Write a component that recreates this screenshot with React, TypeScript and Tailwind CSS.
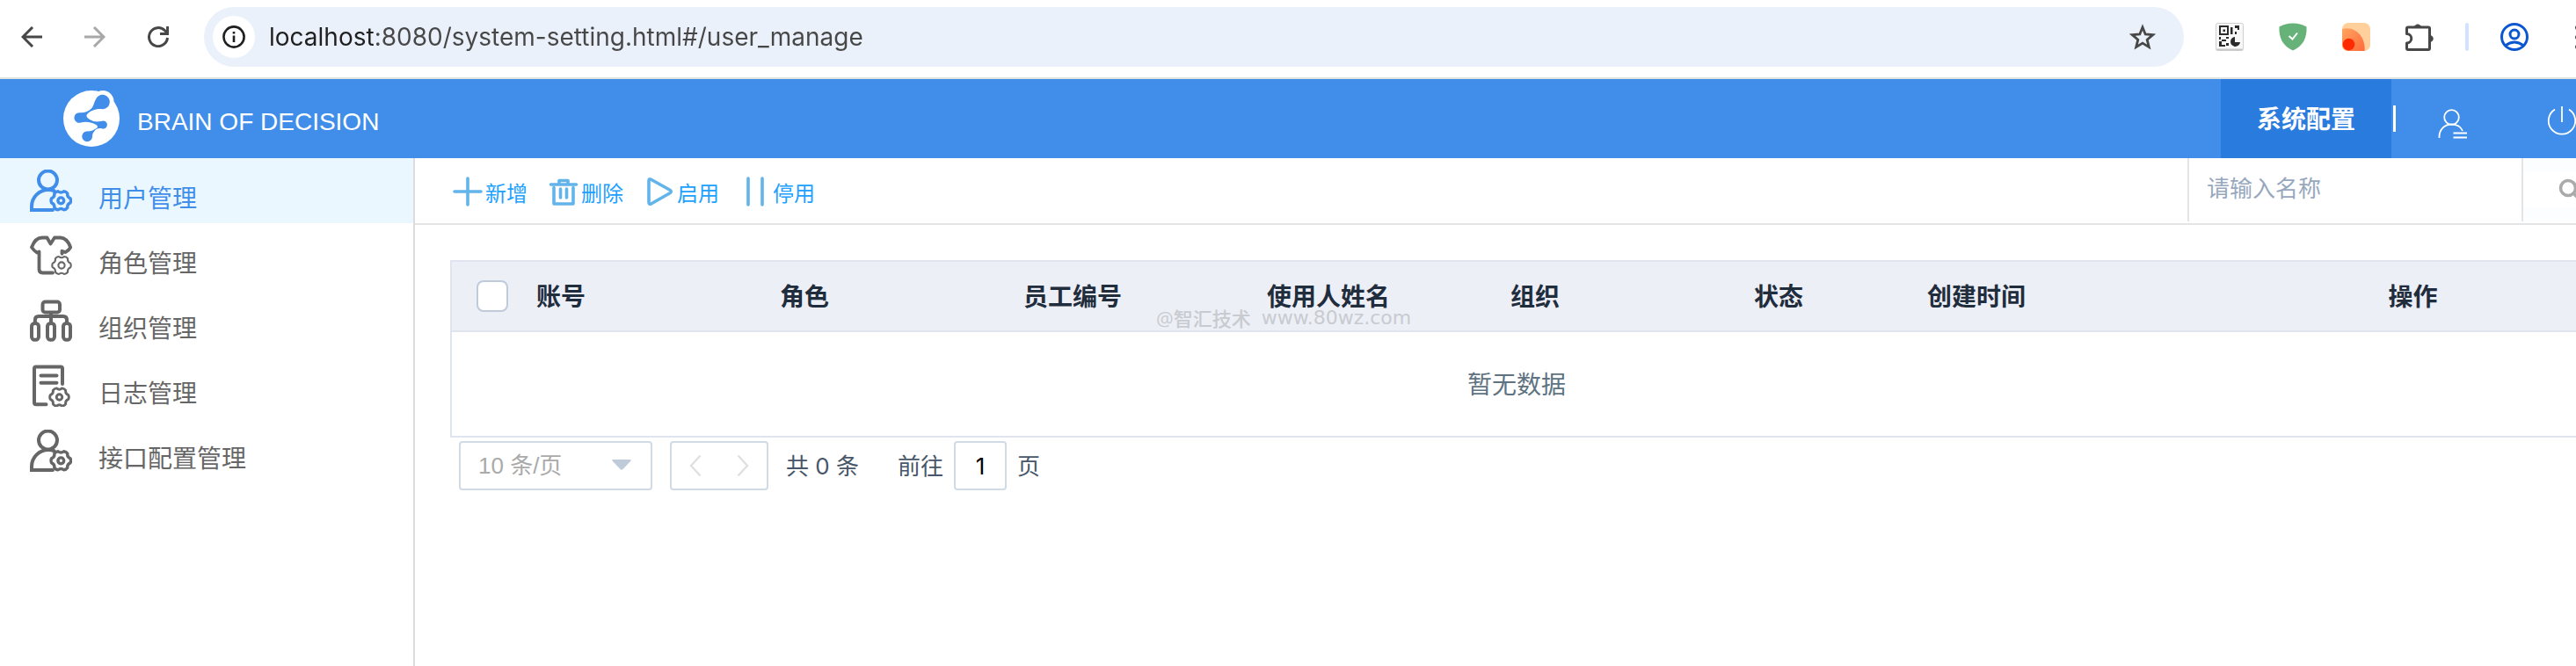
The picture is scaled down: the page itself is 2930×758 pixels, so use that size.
import { FC, ReactNode } from "react";

type IconProps = { className?: string };

const GEAR =
  "M10.7-2.5Q11.8 0 10.7 2.5Q6.8 4 7.5 8Q6 10.3 3.2 10.5Q0 7.9-3.2 10.5Q-6 10.3-7.5 8Q-6.8 4-10.7 2.5Q-11.8 0-10.7-2.5Q-6.8-4-7.5-8Q-6-10.3-3.2-10.5Q0-7.9 3.2-10.5Q6-10.3 7.5-8Q6.8-4 10.7-2.5Z";

const UserGearIcon: FC<IconProps> = ({ className }) => (
  <svg viewBox="0 0 48 48" className={className} fill="none" stroke="currentColor" strokeWidth="4" aria-hidden="true">
    <circle cx="20.5" cy="12" r="10.5" />
    <path d="M26 46H2v-4C2 31 11 23 21 23c2.500 0 4.500.4 6.500 1.200" strokeLinecap="round" />
    <g transform="translate(35.300 35.300)" strokeWidth="3.400">
      <path d={GEAR} strokeLinejoin="round" />
      <circle r="3.400" />
    </g>
  </svg>
);

const ShirtGearIcon: FC<IconProps> = ({ className }) => (
  <svg viewBox="0 0 48 48" className={className} fill="none" stroke="currentColor" strokeWidth="3.800" strokeLinejoin="round" strokeLinecap="round" aria-hidden="true">
    <path d="M26 43.500H14.500q-4 0-4-4V19.500L8 20.500Q4.500 18 2 14.500Q6 3.500 14 3.500h5.500l4 7 4.500-7h7Q42.500 4 46.200 14.500Q44 18.500 40.500 20l-4-1.200v3" />
    <g transform="translate(36 35) scale(.95)" strokeWidth="2.200">
      <path d={GEAR} />
      <circle r="3.800" />
    </g>
  </svg>
);

const OrgIcon: FC<IconProps> = ({ className }) => (
  <svg viewBox="0 0 48 48" className={className} fill="none" stroke="currentColor" strokeWidth="4" aria-hidden="true">
    <rect x="14.500" y="2.500" width="19.500" height="12" rx="3" />
    <path d="M24 14.500V26M5.900 27v-4q0-4 4-4H38q4 0 4 4v4" />
    <rect x="2" y="27" width="8" height="18.800" rx="3.500" />
    <rect x="20" y="27" width="8" height="18.800" rx="3.500" />
    <rect x="38" y="27" width="8" height="18.800" rx="3.500" />
  </svg>
);

const LogGearIcon: FC<IconProps> = ({ className }) => (
  <svg viewBox="0 0 48 48" className={className} fill="none" stroke="currentColor" strokeWidth="4" strokeLinecap="round" aria-hidden="true">
    <path d="M18.500 45.200H7q-2 0-2-2V4.500q0-2 2-2H35q2 0 2 2V22M12.500 12.500h18M12.500 20.700h18" />
    <g transform="translate(33.500 37) scale(.96)" strokeWidth="3">
      <path d={GEAR} strokeLinejoin="round" />
      <circle r="3.400" />
    </g>
  </svg>
);

const LogoIcon: FC<IconProps> = ({ className }) => (
  <svg viewBox="0 0 64 64" className={className} aria-hidden="true">
    <circle cx="32" cy="32" r="32" fill="#fff" />
    <circle cx="45" cy="12.500" r="12.500" fill="#fff" />
    <g fill="#408eea">
      <path d="M37 10A8.200 8.200 0 1 1 45 21.200C38 20 31 22.500 27 27C25.500 29.500 27.500 31.500 31 33.500C34 35.500 38 36 43 35A4.600 4.600 0 1 1 43 43C40 42.500 37 43.500 35.500 46C33.500 48.500 33 50 33 53A5.900 5.900 0 1 1 26 46.500C31 46.800 35 45 38.500 42.500C39.500 41 38.500 39.500 36.500 38.500C31 36 26 35 20 36.500A5.800 5.800 0 1 1 18.500 25.200C24 25.500 29 24 32.500 20C34.500 17 35 13.500 37 10Z" />
    </g>
  </svg>
);

const QrIcon: FC<IconProps> = ({ className }) => (
  <svg viewBox="0 0 32 32" className={className} aria-hidden="true">
    <rect x=".5" y=".5" width="31" height="31" rx="2" fill="#f8f8f8" stroke="#d0d0d0" />
    <path d="M1 30.500h30" stroke="#c8c8c8" strokeWidth="2" />
    <g fill="#2b2b2b">
      <path d="M4 3h11v11H4zM6 5v7h7V5z" fillRule="evenodd" />
      <path d="M8.500 7.500h2.500v2.500H8.500zM17 5h2.500v8H17zM22 3h5v5h-2V6h-3zM22 10h2v3h-2zM4 16h2v3H4zM9 19h3v2H9zM12 16h3v2h-3zM4 21h3v6H4zM7 25h4v2H7zM12 23h3v3h-3zM7 19h2v2H7z" />
      <path d="M22 16v6h6a5.500 5.500 0 1 1-6-6Z" />
    </g>
  </svg>
);

const ShieldIcon: FC<IconProps> = ({ className }) => (
  <svg viewBox="0 0 32 32" className={className} aria-hidden="true">
    <path d="M16 .5c5.500 0 11 1.500 15.500 4C32 17 28 26 16 31.500C4 26 0 17 .5 4.500C5 2 10.500.5 16 .5Z" fill="#67b279" />
    <path d="M11.500 15l4 3.500 5.500-7" fill="none" stroke="#fff" strokeWidth="2" />
  </svg>
);

const SunsetIcon: FC<IconProps> = ({ className }) => (
  <svg viewBox="0 0 32 32" className={className} aria-hidden="true">
    <defs>
      <linearGradient id="sunset" x1="0" y1="0" x2="1" y2="1">
        <stop offset="0" stopColor="#ffa55f" />
        <stop offset="1" stopColor="#ff6a3c" />
      </linearGradient>
      <clipPath id="sunset-box">
        <rect width="32" height="32" rx="7" />
      </clipPath>
    </defs>
    <g clipPath="url(#sunset-box)">
      <rect width="32" height="32" fill="#ffcf9c" />
      <path d="M0 7C14 3 27 15 25.500 32H0Z" fill="url(#sunset)" />
      <circle cx="7.500" cy="24.500" r="6.800" fill="#ff2a00" />
    </g>
  </svg>
);

const PuzzleIcon: FC<IconProps> = ({ className }) => (
  <svg viewBox="0 0 32 32" className={className} fill="none" stroke="#474747" strokeWidth="3" strokeLinejoin="round" aria-hidden="true">
    <path d="M1.500 6.500q0-1.500 1.500-1.500H26q1.500 0 1.500 1.500V29q0 1.500-1.500 1.500H3q-1.500 0-1.500-1.500V23a5 5 0 0 0 0-10.500Z" />
    <path d="M10.500 4a4 4 0 0 1 7 0ZM28.500 14.500a3.600 3.600 0 0 1 0 7Z" fill="#474747" strokeWidth="1" />
  </svg>
);

const LINE_ICONS = {
  plus: <path d="M17 2v30M2 17h30" />,
  trash: <path d="M2.500 9h29M12 8V4.500h10V8M6 12.500v18.500h22V12.500M13.500 14v10M20.500 14v10" />,
  play: <path d="M5 5q0-3 2.500-1.700L29 15.300q2.500 1.700 0 3.400L7.500 31Q5 32 5 29Z" />,
  pause: <path d="M9 2v30M25 2v30" />,
};

const TOOLS: { name: string; icon: keyof typeof LINE_ICONS }[] = [
  { name: "新增", icon: "plus" },
  { name: "删除", icon: "trash" },
  { name: "启用", icon: "play" },
  { name: "停用", icon: "pause" },
];

const MENU: { name: string; icon: FC<IconProps>; active?: boolean }[] = [
  { name: "用户管理", icon: UserGearIcon, active: true },
  { name: "角色管理", icon: ShirtGearIcon },
  { name: "组织管理", icon: OrgIcon },
  { name: "日志管理", icon: LogGearIcon },
  { name: "接口配置管理", icon: UserGearIcon },
];

const ChromeButton: FC<{ label: string; children: ReactNode }> = ({ label, children }) => (
  <button type="button" aria-label={label} className="shrink-0">
    {children}
  </button>
);

const BrowserBar = () => (
  <div className="flex h-[90px] items-center border-b-2 border-[#e0e2e0] bg-white pb-1 pl-6">
    <div className="flex gap-12 pr-10 text-[#474747]">
      <ChromeButton label="后退">
        <svg viewBox="0 0 24 24" className="size-6" fill="none" stroke="currentColor" strokeWidth="3">
          <path d="M24 12H2M13 1L2 12l11 11" />
        </svg>
      </ChromeButton>
      <ChromeButton label="前进">
        <svg viewBox="0 0 24 24" className="size-6 text-[#a8a8a8]" fill="none" stroke="currentColor" strokeWidth="3">
          <path d="M0 12h22M11 1l11 11-11 11" />
        </svg>
      </ChromeButton>
      <ChromeButton label="刷新">
        <svg viewBox="0 0 24 24" className="size-6" fill="none" stroke="currentColor" strokeWidth="3">
          <path d="M22.500 13A10.500 10.500 0 1 1 19.500 4.700L22.500 8M22.600 0v8.600H14" />
        </svg>
      </ChromeButton>
    </div>
    <div className="flex h-[68px] flex-1 items-center rounded-full bg-[#ebf1fa] pr-8 pl-[10px]">
      <button type="button" aria-label="网站信息" className="flex size-12 items-center justify-center rounded-full bg-white">
        <svg viewBox="0 0 26 26" className="size-[26px]" fill="none" stroke="#1f1f1f" strokeWidth="2.600">
          <circle cx="13" cy="13" r="11.600" />
          <path d="M13 11.500v7.500M13 7v2.600" />
        </svg>
      </button>
      <input
        aria-label="地址"
        defaultValue="localhost:8080/system-setting.html#/user_manage"
        className="ml-4 flex-1 bg-[linear-gradient(to_right,#1f1f1f_120px,#474747_120px)] bg-clip-text font-[Inter,sans-serif] text-[28px] text-transparent outline-none"
      />
      <ChromeButton label="收藏">
        <svg viewBox="0 0 30 30" className="size-[30px]" fill="none" stroke="#474747" strokeWidth="2.800">
          <path d="M15 4l3.200 8 8.600.700-6.600 5.500 2.100 8.400L15 22.100l-7.300 4.500 2.100-8.400L3.200 12.700l8.600-.700Z" />
        </svg>
      </ChromeButton>
    </div>
    <div className="flex items-center gap-10 pl-9">
      <ChromeButton label="二维码">
        <QrIcon className="size-8" />
      </ChromeButton>
      <ChromeButton label="广告拦截">
        <ShieldIcon className="size-8" />
      </ChromeButton>
      <ChromeButton label="扩展">
        <SunsetIcon className="size-8" />
      </ChromeButton>
      <ChromeButton label="扩展程序">
        <PuzzleIcon className="size-8" />
      </ChromeButton>
    </div>
    <div className="mx-9 h-8 w-1 rounded-full bg-[#d3e3fd]" />
    <ChromeButton label="个人资料">
      <svg viewBox="0 0 32 32" className="size-8" fill="none" stroke="#0b57d0" strokeWidth="3">
        <circle cx="16" cy="16" r="14.500" />
        <circle cx="16" cy="13" r="5" />
        <path d="M5.500 26q10.500-8 21 0" />
      </svg>
    </ChromeButton>
    <div className="-mr-1 ml-[53px] flex flex-col gap-[6px]">
      <i className="size-[5px] rounded-full bg-[#474747]" />
      <i className="size-[5px] rounded-full bg-[#474747]" />
      <i className="size-[5px] rounded-full bg-[#474747]" />
    </div>
  </div>
);

const Header = () => (
  <header className="flex h-[90px] items-center bg-[#408eea] pl-[72px] text-white">
    <LogoIcon className="size-16 overflow-visible" />
    <h1 className="mt-2 ml-5 font-['Liberation_Sans',sans-serif] text-[28px]">BRAIN OF DECISION</h1>
    <nav className="-mr-px ml-auto flex items-center self-stretch">
      <a href="#/user_manage" className="flex w-[194px] items-center justify-center self-stretch bg-[#2a7bde] text-[28px] font-bold">
        系统配置
      </a>
      <span className="ml-[2px] h-[30px] w-[3px] bg-white" />
      <button type="button" aria-label="用户" className="mt-3 ml-12">
        <svg viewBox="0 0 34 34" className="size-[34px]" fill="none" stroke="currentColor" strokeWidth="1.800">
          <circle cx="15.500" cy="9.500" r="8.300" />
          <path d="M1.500 33C1 24 7 17.500 15.500 17.500c6 0 10.500 3 12.500 7.500M17.500 27.500H33M17.500 32.500H33" />
        </svg>
      </button>
      <button type="button" aria-label="退出" className="mt-1 ml-[90px]">
        <svg viewBox="0 0 34 34" className="size-[34px]" fill="none" stroke="currentColor" strokeWidth="1.800">
          <path d="M9 4.500A15.200 15.200 0 1 0 25 4.500M17 1v18" />
        </svg>
      </button>
    </nav>
  </header>
);

const Sidebar = () => (
  <aside className="w-[472px] shrink-0 border-r-2 border-[#dcdcdc]">
    {MENU.map(({ name, icon: Icon, active }) => (
      <a
        key={name}
        href="#"
        className={
          active
            ? "flex h-[74px] items-center bg-[#ebf7ff] pl-[34px] text-[#408eea]"
            : "flex h-[74px] items-center pl-[34px] text-[#666]"
        }
      >
        <Icon className="size-12" />
        <span className="mt-4 ml-[30px] text-[28px]">{name}</span>
      </a>
    ))}
  </aside>
);

const Toolbar = () => (
  <div className="flex h-[76px] items-start border-b-2 border-[#e4e4e4] pl-[43px]">
    <div className="flex h-[76px] items-center gap-6">
      {TOOLS.map(({ name, icon }) => (
        <button key={name} type="button" className="flex items-center gap-[3px] text-2xl text-[#20a0ff]">
          <svg viewBox="0 0 34 34" className="size-[34px] text-[#62b4ea]" fill="none" stroke="currentColor" strokeWidth="3.600" strokeLinecap="round" strokeLinejoin="round" aria-hidden="true">
            {LINE_ICONS[icon]}
          </svg>
          <span className="mt-1">{name}</span>
        </button>
      ))}
    </div>
    <div className="-mr-9 ml-auto flex h-[72px] border-l-2 border-[#e4e4e4]">
      <input
        aria-label="名称"
        placeholder="请输入名称"
        className="w-[380px] border-r-2 border-[#e4e4e4] px-5 pb-1 text-[26px] outline-none placeholder:text-[#97a8be]"
      />
      <div className="flex items-center bg-[#fbfdff]">
        <button type="button" aria-label="搜索" className="flex h-10 w-24 items-center bg-white pl-10">
          <svg viewBox="0 0 26 26" className="size-[26px]" fill="none" stroke="#aaa" strokeWidth="3.600">
            <circle cx="11" cy="11" r="8.500" />
            <path d="M17 17l8 8" />
          </svg>
        </button>
      </div>
    </div>
  </div>
);

const UserTable = () => (
  <div className="relative mt-10 -mr-2 ml-10">
    <table className="w-full table-fixed border-collapse border-2 border-[#dfe4ee] text-left text-[28px] leading-7">
      <thead className="bg-[#edeff7] text-[#1f2d3d]">
        <tr className="h-20">
          <th className="w-[97px] pl-7">
            <input
              type="checkbox"
              aria-label="全选"
              className="block size-9 appearance-none rounded-lg border-2 border-[#bfcbd9] bg-white"
            />
          </th>
          <th className="w-[277px]">账号</th>
          <th className="w-[277px]">角色</th>
          <th className="w-[277px]">员工编号</th>
          <th className="w-[277px]">使用人姓名</th>
          <th className="w-[277px]">组织</th>
          <th className="w-[197px]">状态</th>
          <th>创建时间</th>
          <th className="w-[384px] text-center">操作</th>
        </tr>
      </thead>
      <tbody>
        <tr className="h-[120px] border-t-2 border-[#dfe4ee]">
          <td colSpan={9} className="text-center text-[#5e7382]">
            暂无数据
          </td>
        </tr>
      </tbody>
    </table>
    <p className="pointer-events-none absolute top-[55px] left-[803px] flex gap-3 text-[22px] leading-[22px] font-medium text-[#c8cbd0]">
      <span>@智汇技术</span>
      <span className="font-['DejaVu_Sans',sans-serif]">www.80wz.com</span>
    </p>
  </div>
);

const Pagination = () => (
  <div className="mt-1 ml-[50px] flex h-14 items-center font-[Inter,'Noto_Sans_CJK_SC',sans-serif] text-[26px] text-[#475669]">
    <div className="relative mr-5 h-full w-[220px]">
      <select
        aria-label="每页条数"
        className="size-full appearance-none rounded border-2 border-[#d1dbe5] bg-white pl-5 font-['Liberation_Sans','Noto_Sans_CJK_SC',sans-serif] text-[#aaa]"
      >
        <option>10 条/页</option>
      </select>
      <svg viewBox="0 0 22 12" className="pointer-events-none absolute top-[21px] right-6 h-3 w-[22px]" fill="#bfcbd9">
        <path d="M1.500 0h19q2 0 .8 1.800L12.500 11q-1.500 1.500-3 0L.7 1.800Q-.5 0 1.500 0Z" />
      </svg>
    </div>
    <div className="mr-5 flex h-full w-28 items-center justify-between rounded border-2 border-[#d1dbe5] px-5 text-[#e0e0e0]">
      <button type="button" aria-label="上一页" disabled>
        <svg viewBox="0 0 14 26" className="h-[26px] w-[14px]" fill="none" stroke="currentColor" strokeWidth="2.400">
          <path d="M12.500 1.500L2 13l10.500 11.500" />
        </svg>
      </button>
      <button type="button" aria-label="下一页" disabled>
        <svg viewBox="0 0 14 26" className="h-[26px] w-[14px]" fill="none" stroke="currentColor" strokeWidth="2.400">
          <path d="M1.500 1.500L12 13 1.500 24.500" />
        </svg>
      </button>
    </div>
    <span className="mr-11">共 0 条</span>
    <label htmlFor="page">前往</label>
    <input
      id="page"
      defaultValue="1"
      className="mx-3 h-full w-[60px] rounded border-2 border-[#d1dbe5] text-center text-black outline-none"
    />
    <span>页</span>
  </div>
);

export default function App() {
  return (
    <div className="flex min-h-screen flex-col overflow-hidden bg-white font-['Open_Sans','Noto_Sans_CJK_SC',sans-serif]">
      <BrowserBar />
      <Header />
      <div className="flex flex-1">
        <Sidebar />
        <main className="min-w-0 flex-1">
          <Toolbar />
          <UserTable />
          <Pagination />
        </main>
      </div>
    </div>
  );
}
